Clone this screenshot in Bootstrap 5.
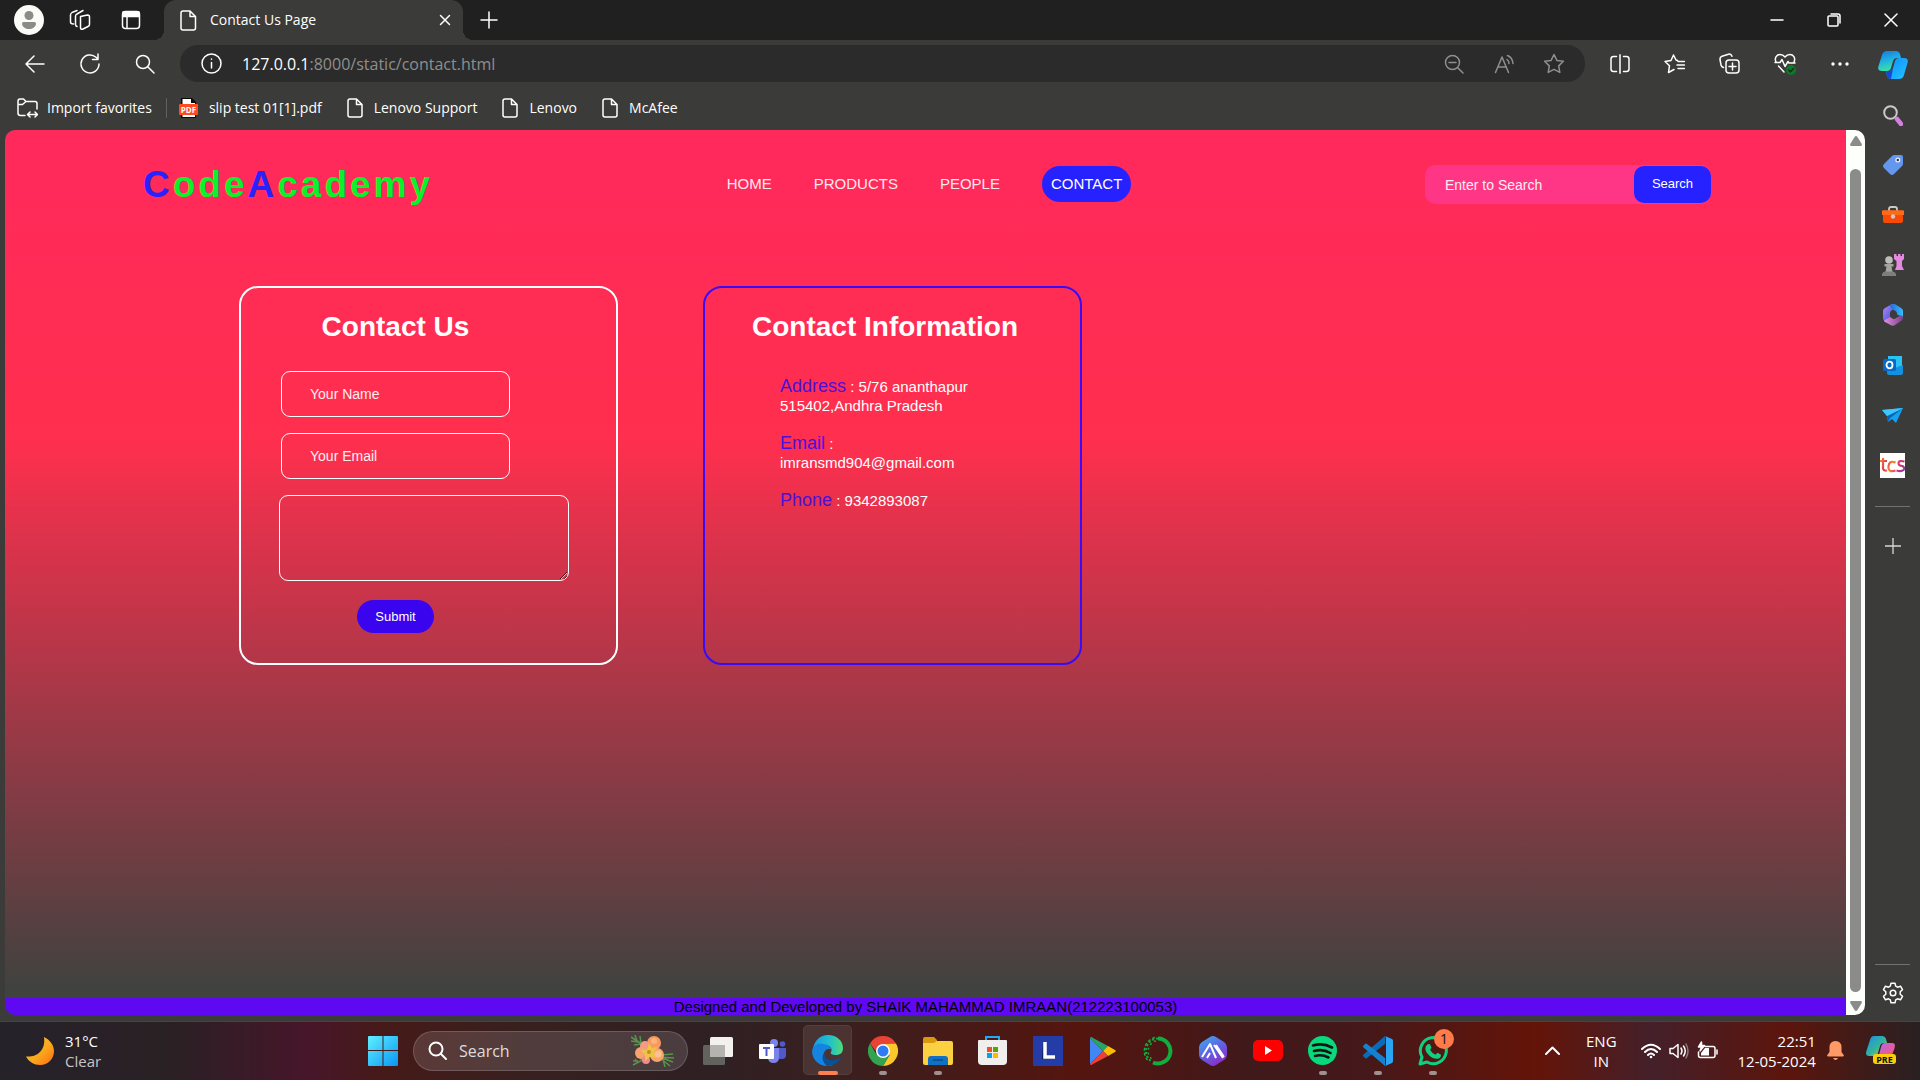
<!DOCTYPE html>
<html lang="en">
<head>
<meta charset="utf-8">
<meta name="viewport" content="width=device-width, initial-scale=1">
<title>Contact Us Page</title>
<link href="https://cdn.jsdelivr.net/npm/bootstrap@5.3.0/dist/css/bootstrap.min.css" rel="stylesheet">
<style>
  body { background: #3b3b39; color: #fff; font-family: "Open Sans", "Noto Sans", sans-serif; font-size: 14px; line-height: 20px; }
  svg { display: block; flex: none; }
  a { color: inherit; text-decoration: none; }
  .ln { fill: none; stroke: currentColor; stroke-width: 1.5; stroke-linecap: round; stroke-linejoin: round; }
  .flat { background: none; border: 0; padding: 0; color: inherit; display: flex; align-items: center; justify-content: center; flex: none; }
  .shrinkable { min-width: 0; min-height: 0; }

  /* tab strip */
  .tabstrip { background: #202020; height: 40px; flex: none; padding: 0 1px 0 3px; }
  .w51 { width: 51px; height: 40px; }
  .w57 { width: 57px; height: 40px; }
  .w55 { width: 55px; height: 50px; }
  .w50 { width: 50px; height: 36px; }
  .tab-on { width: 299px; height: 40px; background: #3b3b39; border-radius: 12px 12px 0 0; margin-left: 8px; padding: 0 12px 0 16px; position: relative; gap: 13px; }
  .tab-on::before, .tab-on::after { content: ""; position: absolute; bottom: 0; width: 10px; height: 10px; }
  .tab-on::before { left: -10px; background: radial-gradient(circle at 0 0, transparent 10px, #3b3b39 10px); }
  .tab-on::after { right: -10px; background: radial-gradient(circle at 100% 0, transparent 10px, #3b3b39 10px); }

  /* toolbar and favourites */
  .toolbar { height: 47px; padding-left: 7px; margin-right: -2px; }
  .omni { background: #2b2b2b; border-radius: 18px; height: 37px; margin: 0 7px 0 8px; padding-left: 21px; padding-right: 6px; color: #8f8f8f; }
  .omni .url { font-size: 16px; }
  .favs { height: 43px; padding: 0 0 2px 17px; }
  .favs a { display: flex; align-items: center; gap: 11px; margin-right: 25px; }
  .favs a.import { gap: 9px; margin-right: 0; }
  .favs .bar { width: 1px; height: 20px; background: #61615f; margin: 0 12px 0 14px; }

  /* page */
  .view { margin: 0 0 6px 5px; border-radius: 10px; overflow: hidden; min-height: 0; }
  .site { font-family: "Liberation Sans", Arial, sans-serif; background: linear-gradient(#ff295c 0%, #ff2f4e 35%, #40423f 97%); }
  .site-head { padding: 35px 135px 0 138px; height: 74px; }
  .brand { font-size: 37px; font-weight: 700; line-height: 39px; letter-spacing: 3px; color: #0df12c; }
  .brand span { color: #2a21ff; }
  .menu { gap: 42px; font-size: 15px; color: #ffe8ee; margin-bottom: 2px; }
  .menu .here { background: #2521ff; color: #fff; border-radius: 18px; height: 36px; line-height: 35px; padding: 0 9px; }
  .find { background: #ff3686; border-radius: 10px; width: 286px; height: 39px; }
  .find input { background: none; border: 0; color: #fff; font-size: 14px; padding: 0 0 0 20px; min-width: 0; flex: 1; outline: 0; }
  .find input::placeholder, .field::placeholder { color: #ffeef2; opacity: 1; }
  .find button { background: #2521ff; color: #fff; border: 0; border-radius: 10px; width: 77px; height: 37px; font-size: 13px; padding: 0 0 1px; }
  .panels { gap: 85px; padding: 82px 0 0 234px; }
  .panel { width: 379px; height: 379px; border: 2px solid #fff; border-radius: 19px; padding-top: 23px; }
  .panel.blue { border-color: #3a0cf5; }
  .panel h2 { font-size: 28px; font-weight: 700; line-height: 32px; margin: 0; text-align: center; }
  .mail { width: 233px; margin-left: 38px; }
  .field { background: none; border: 1px solid #fff; border-radius: 9px; color: #fff; font-size: 14px; width: 229px; height: 46px; padding: 0 28px; outline: 0; margin-bottom: 16px; }
  .mail h2 { margin-bottom: 28px; }
  textarea.field { width: 290px; height: 86px; align-self: flex-start; margin-bottom: 19px; flex: none; }
  .send { background: #3a04ef; color: #fff; border: 0; border-radius: 17px; width: 77px; height: 33px; font-size: 13px; padding: 0; }
  .info { width: 360px; }
  .facts { width: 210px; margin: 34px auto 0; font-size: 15px; line-height: 19px; }
  .facts p { margin: 0 0 19px; }
  .facts span { font-size: 18px; color: #4a10de; }
  .site-foot { background: #5e09f2; color: #000; font-size: 15px; line-height: 17px; text-align: center; }
  .scroller { width: 19px; background: #fdfffb; padding: 6px 0 4px; flex: none; }
  .thumb { width: 11px; background: #8b8b89; border-radius: 6px; margin: 23px 0 9px; flex: 1; }

  /* side bar */
  .side { width: 55px; flex: none; }
  .side .rule { width: 35px; height: 1px; background: #72726f; }
  .side .more { margin-top: 14px; }
  .side .gear { margin: 3px 0; }

  /* task bar */
  .taskbar { height: 59px; flex: none; border-top: 1px solid #4a4140; padding-bottom: 1px; font-size: 15px;
    background: linear-gradient(90deg, #25222a 0%, #2a2024 9%, #47162a 16%, #451a18 20%, #38201f 27%, #2f2024 37%, #3a1f1e 44%, #55150f 56%, #40191a 65%, #45181a 71%, #641408 80%, #44202a 86%, #5c150c 93%, #292022 100%); }
  .weather { padding-left: 26px; gap: 11px; flex: 1; }
  .weather span { color: #c9c5c6; }
  .hunt { width: 275px; height: 40px; margin: 0 2px 0 3px; border-radius: 20px; border: 1px solid rgba(255,255,255,.16); background: rgba(255,255,255,.13); padding: 0 12px 0 14px; }
  .hunt input { background: none; border: 0; color: #ddd; font-size: 16px; min-width: 0; flex: 1; padding: 0 0 0 12px; outline: 0; }
  .hunt input::placeholder { color: #ddd; opacity: 1; }
  .app { width: 55px; height: 57px; position: relative; }
  .app.dot::after { content: ""; position: absolute; left: 24px; bottom: 4px; width: 8px; height: 4px; border-radius: 2px; background: #a09090; }
  .app.live::before { content: ""; position: absolute; left: 3px; top: 3px; width: 49px; height: 50px; border-radius: 5px; background: rgba(255,255,255,.09); border: 1px solid rgba(255,255,255,.06); }
  .app.live::after { content: ""; position: absolute; left: 18px; bottom: 4px; width: 20px; height: 4px; border-radius: 2px; background: #ff7f50; }
  .app svg { position: relative; }
  .count { position: absolute; right: 6px; top: 7px; width: 20px; height: 20px; border-radius: 50%; background: #ff7b4a; color: #111; font-size: 14px; line-height: 20px; }
  .bold-ln { stroke-width: 2; }
  .tray { width: 460px; padding-left: 85px; }
  .tray .lang { margin: 0 24px 0 26px; text-align: center; }
  .tray .clock { text-align: right; margin-left: 20px; }
  .tray .bell { margin: 0 22px 0 11px; }
</style>
<script src="https://cdn.jsdelivr.net/npm/bootstrap@5.3.0/dist/js/bootstrap.bundle.min.js"></script>
</head>
<body class="vh-100 d-flex flex-column overflow-hidden">

<header class="tabstrip d-flex align-items-center">
  <button class="flat w51" aria-label="Profile"><svg width="30" height="30" viewBox="0 0 30 30"><circle cx="15" cy="15" r="15" fill="#fbfbf7"/><circle cx="15" cy="10.500" r="4.500" fill="#8b8b89"/><path d="M8 18.500q0-1.500 1.500-1.500h11q1.500 0 1.500 1.500c0 3.500-3.500 5.500-7 5.500s-7-2-7-5.500z" fill="#8b8b89"/></svg></button>
  <button class="flat w51" aria-label="Workspaces"><svg class="ln" width="22" height="22" viewBox="0 0 22 22"><path d="M11.500 7.500l7-1.500q2 0 2 2v7.500q0 1.500-1.500 2l-5 2.500q-2.500 1-2.500-1.500zM8 17.500q-1.500-.5-1.500-2V7.500q0-2 1.500-2.500l6-3.500M4.500 15q-3 0-3-2V6q0-1.500 1.500-2.500L8 1.500"/></svg></button>
  <button class="flat w51" aria-label="Tab actions"><svg class="ln" width="20" height="20" viewBox="0 0 20 20"><rect x="1.500" y="1.500" width="17" height="17" rx="3"/><path d="M2 2h16v4.500H2z" fill="#fff"/><path d="M6 7v11"/></svg></button>
  <div class="tab-on d-flex align-items-center">
    <svg class="ln" width="17" height="21" viewBox="0 0 17 21"><path d="M3 1h7l5.500 5.500V18q0 2-2 2H3q-2 0-2-2V3q0-2 2-2zM10 1v5.500h5.500"/></svg>
    <span class="flex-grow-1">Contact Us Page</span>
    <button class="flat" aria-label="Close tab"><svg class="ln" width="12" height="12" viewBox="0 0 12 12"><path d="M1.500 1.500l9 9M10.500 1.500l-9 9"/></svg></button>
  </div>
  <button class="flat w51" aria-label="New tab"><svg class="ln" width="18" height="18" viewBox="0 0 18 18"><path d="M9 1v16M1 9h16"/></svg></button>
  <div class="ms-auto d-flex">
    <button class="flat w57" aria-label="Minimize"><svg class="ln" width="14" height="14" viewBox="0 0 14 14"><path d="M1 7h12"/></svg></button>
    <button class="flat w57" aria-label="Restore"><svg class="ln" width="14" height="14" viewBox="0 0 14 14"><rect x="1" y="3" width="10" height="10" rx="1"/><path d="M4 1h7q2 0 2 2v7"/></svg></button>
    <button class="flat w57" aria-label="Close"><svg class="ln" width="14" height="14" viewBox="0 0 14 14"><path d="M1 1l12 12M13 1L1 13"/></svg></button>
  </div>
</header>

<div class="d-flex flex-grow-1 shrinkable">
  <div class="d-flex flex-column flex-grow-1 shrinkable">
    <div class="toolbar d-flex align-items-center">
      <button class="flat w55" aria-label="Back"><svg class="ln" width="20" height="18" viewBox="0 0 20 18"><path d="M19 9H1M9 1L1 9l8 8"/></svg></button>
      <button class="flat w55" aria-label="Refresh"><svg class="ln" width="22" height="22" viewBox="0 0 22 22"><path d="M20 11a9 9 0 1 1-3-6.800L19 6M19 1v5.500h-5.500"/></svg></button>
      <button class="flat w55" aria-label="Search"><svg class="ln" width="20" height="20" viewBox="0 0 20 20"><circle cx="8" cy="8" r="6.500"/><path d="M13 13l6 6"/></svg></button>
      <div class="omni d-flex align-items-center flex-grow-1">
        <svg class="ln text-white" width="21" height="21" viewBox="0 0 21 21"><circle cx="10.500" cy="10.500" r="9.500"/><path d="M10.500 9.500v5.500M10.500 6v.300"/></svg>
        <div class="url flex-grow-1 ms-3 ps-1"><span class="text-white">127.0.0.1</span>:8000/static/contact.html</div>
        <button class="flat w50" aria-label="Zoom out"><svg class="ln" width="20" height="20" viewBox="0 0 20 20"><circle cx="8.500" cy="8.500" r="7"/><path d="M14 14l5 5M5 8.500h7"/></svg></button>
        <button class="flat w50" aria-label="Read aloud"><svg class="ln" width="21" height="20" viewBox="0 0 21 20"><path d="M1.500 18.500L8 3l6.500 15.500M4 13h8M13 5.500q2 1.500 2 4M13.500 1.500q5 2 5.500 8"/></svg></button>
        <button class="flat w50" aria-label="Add favourite"><svg class="ln" width="22" height="21" viewBox="0 0 22 21"><path d="M11 1.500l2.900 5.900 6.500.900-4.700 4.600 1.100 6.500-5.800-3-5.800 3 1.100-6.500L1.600 8.300l6.500-.900z"/></svg></button>
      </div>
      <button class="flat w55" aria-label="Split screen"><svg class="ln" width="20" height="20" viewBox="0 0 20 20"><path d="M10 .800v18.400M6.500 2.500H3.500q-2.500 0-2.500 2.500v10q0 2.500 2.500 2.500h3M13.500 2.500h3q2.500 0 2.500 2.500v10q0 2.500-2.500 2.500h-3"/></svg></button>
      <button class="flat w55" aria-label="Favourites"><svg class="ln" width="21" height="20" viewBox="0 0 21 20"><path d="M13.500 6.500L12 6 9.500 1 7 6.500l-6 1 4.500 4.200-1 6.800 5.500-3M14 7.500h6.500M13 11h7.500M14 14.500h6.500"/></svg></button>
      <button class="flat w55" aria-label="Collections"><svg class="ln" width="21" height="21" viewBox="0 0 21 21"><path d="M4.500 14.500Q2.500 14 2 12L1 6.500Q.800 4 3 3.300L9.500 1.200q2.500-.700 3.500 2"/><rect x="7" y="7" width="13" height="13" rx="3"/><path d="M13.500 10v7M10 13.500h7"/></svg></button>
      <button class="flat w55" aria-label="Browser essentials"><svg class="ln" width="22" height="22" viewBox="0 0 22 22"><path d="M2 9C0 4.500 3 1.500 6 1.500q3 0 5 2.500 2-2.500 5-2.500c3 0 6 3 4 7.500M1 9.500h5l2-3 3 7 3-5 1 1.500h6M4.500 13l5.500 6"/><circle cx="17" cy="17" r="5" fill="#0b7a25" stroke="none"/><path d="M14.800 17l1.700 1.700 3-3.200" stroke="#223"/></svg></button>
      <button class="flat w55" aria-label="Settings and more"><svg width="18" height="6" viewBox="0 0 18 6" fill="#fff"><circle cx="2" cy="3" r="1.700"/><circle cx="9" cy="3" r="1.700"/><circle cx="16" cy="3" r="1.700"/></svg></button>
    </div>
    <nav class="favs d-flex align-items-center" aria-label="Favourites bar">
      <a href="#" class="import"><svg class="ln" width="21" height="20" viewBox="0 0 21 20"><path d="M8 17.500H3.500q-2.500 0-2.500-2.500V3.500Q1 1 3 1h3.500L9 3.500h9q2 0 2 2V11M1 6.500h4.500L9 3.500M11 16.500h9M13 14l-2.500 2.500L13 19M18 14l2.500 2.500L18 19"/></svg>Import favorites</a>
      <span class="bar"></span>
      <a href="#"><svg width="19" height="20" viewBox="0 0 19 20"><path d="M2 0h11l4 4v16H2z" fill="#0a0a0a"/><path d="M3.500 1h8.500v4h4v14H3.500z" fill="#fff"/><rect y="6" width="19" height="11" rx="1" fill="#ff4b1f"/><text x="9.500" y="14.500" font-size="8" font-weight="700" fill="#fff" text-anchor="middle" font-family="Open Sans">PDF</text></svg>slip test 01[1].pdf</a>
      <a href="#"><svg class="ln" width="16" height="20" viewBox="0 0 16 20"><path d="M3 1h6.500L15 6.500V17q0 2-2 2H3q-2 0-2-2V3q0-2 2-2zM9.500 1v5.500H15"/></svg>Lenovo Support</a>
      <a href="#"><svg class="ln" width="16" height="20" viewBox="0 0 16 20"><path d="M3 1h6.500L15 6.500V17q0 2-2 2H3q-2 0-2-2V3q0-2 2-2zM9.500 1v5.500H15"/></svg>Lenovo</a>
      <a href="#"><svg class="ln" width="16" height="20" viewBox="0 0 16 20"><path d="M3 1h6.500L15 6.500V17q0 2-2 2H3q-2 0-2-2V3q0-2 2-2zM9.500 1v5.500H15"/></svg>McAfee</a>
    </nav>

    <div class="view d-flex flex-grow-1">
      <main class="site d-flex flex-column flex-grow-1">
        <div class="site-head d-flex justify-content-between align-items-center">
          <a href="#" class="brand"><span>C</span>ode<span>A</span>cademy</a>
          <nav class="menu d-flex align-items-center">
            <a href="#">HOME</a><a href="#">PRODUCTS</a><a href="#">PEOPLE</a><a href="#" class="here">CONTACT</a>
          </nav>
          <form class="find d-flex align-items-center">
            <input type="search" placeholder="Enter to Search" aria-label="Enter to Search">
            <button type="button">Search</button>
          </form>
        </div>
        <div class="panels d-flex">
          <section class="panel">
            <form class="mail d-flex flex-column align-items-center">
              <h2>Contact Us</h2>
              <input class="field" type="text" placeholder="Your Name" aria-label="Your Name">
              <input class="field" type="email" placeholder="Your Email" aria-label="Your Email">
              <textarea class="field" aria-label="Message"></textarea>
              <button class="send" type="button">Submit</button>
            </form>
          </section>
          <section class="panel blue">
            <div class="info">
              <h2>Contact Information</h2>
              <div class="facts">
                <p><span>Address</span> : 5/76 ananthapur 515402,Andhra Pradesh</p>
                <p><span>Email</span> : imransmd904@gmail.com</p>
                <p><span>Phone</span> : 9342893087</p>
              </div>
            </div>
          </section>
        </div>
        <footer class="site-foot mt-auto">Designed and Developed by SHAIK MAHAMMAD IMRAAN(212223100053)</footer>
      </main>
      <div class="scroller d-flex flex-column align-items-center">
        <svg width="12" height="10" viewBox="0 0 12 10"><path d="M6 0q.800 0 1.300.800L11.800 8q.500 2-1.300 2h-9Q-.300 10 .200 8L4.700.800Q5.200 0 6 0z" fill="#8b8b89"/></svg>
        <div class="thumb"></div>
        <svg width="12" height="10" viewBox="0 0 12 10"><path d="M6 10q.800 0 1.300-.800L11.800 2q.500-2-1.300-2h-9Q-.300 0 .200 2l4.500 7.200Q5.200 10 6 10z" fill="#8b8b89"/></svg>
      </div>
    </div>
  </div>

  <aside class="side d-flex flex-column align-items-center">
    <button class="flat w55" aria-label="Copilot"><svg width="30" height="28" viewBox="0 0 30 28"><defs><linearGradient id="cpa" x2=".3" y2="1"><stop stop-color="#1176e8"/><stop offset=".6" stop-color="#24b8dc"/><stop offset="1" stop-color="#3ae0a0"/></linearGradient><linearGradient id="cpb" y2="1"><stop stop-color="#0a8dff"/><stop offset="1" stop-color="#25c4ff"/></linearGradient></defs><path d="M9 0h9q3 0 4 3l1 4h-4q-3 0-4 3l-2 7q-1 3-4 3H4q-5 0-3.500-5L4 4q1-4 5-4z" fill="url(#cpa)"/><path d="M21 28h-8q-3 0-4-3l-1-5h3q3 0 4-3l2-7q1-3 4-3h5q5 0 3.500 5L26 24q-1 4-5 4z" fill="url(#cpb)"/><path d="M8 20h3q3 0 4-3l-2 11q-3 0-4-3z" fill="#1548d8"/></svg></button>
    <button class="flat w55" aria-label="Search"><svg width="20" height="21" viewBox="0 0 20 21"><circle cx="7.500" cy="7.500" r="6.300" fill="none" stroke="#c9c9c5" stroke-width="2"/><path d="M14 14l4 5" stroke="#d77fe0" stroke-width="4.500" stroke-linecap="round"/></svg></button>
    <button class="flat w55" aria-label="Shopping"><svg width="20" height="20" viewBox="0 0 20 20"><path d="M9 1q1-1 2.500-1H18q2 0 2 2v7q0 1-1 2l-8 8q-2 2-4 0l-6-6q-2-2 0-4z" fill="#6398ee"/><circle cx="14.800" cy="5" r="2.500" fill="#eef"/><circle cx="14.800" cy="5" r="1.200" fill="#333"/></svg></button>
    <button class="flat w55" aria-label="Tools"><svg width="22" height="18" viewBox="0 0 22 18"><path d="M7 5V3q0-2 2-2h4q2 0 2 2v2" fill="none" stroke="#c9c9c5" stroke-width="1.800"/><path d="M0 5q0-.800 1-.800h20q1 0 1 .800v4H0z" fill="#ff6a18"/><path d="M1 9h20v6q0 2-2 2H3q-2 0-2-2z" fill="#f64a05"/><circle cx="11" cy="10.500" r="2.200" fill="#d0c8c0"/></svg></button>
    <button class="flat w55" aria-label="Games"><svg width="22" height="22" viewBox="0 0 22 22"><path d="M12 0h2.500v2h1.500V0h2.500v2H20V0h2v5l-2 2v5l2 4H13l1.500-4V7L12 5z" fill="#e389e0"/><circle cx="7" cy="6" r="3.800" fill="#bdbdb9"/><path d="M2.500 10h9v2.500h-2l1 5.500h-7l1-5.500h-2z" fill="#a4a4a0"/><path d="M0 20q1-2.500 3-2.500h8q2 0 3 2.500v2H0z" fill="#7e7e7b"/></svg></button>
    <button class="flat w55" aria-label="Microsoft 365"><svg width="20" height="22" viewBox="0 0 20 22"><defs><linearGradient id="m1" y2="1"><stop stop-color="#b48af0"/><stop offset="1" stop-color="#3b4fe0"/></linearGradient><linearGradient id="m2"><stop stop-color="#2468e0"/><stop offset="1" stop-color="#38bdf8"/></linearGradient><linearGradient id="m3"><stop stop-color="#e090e0"/><stop offset="1" stop-color="#7a3f88"/></linearGradient></defs><path d="M9 0L2 4Q0 5 0 7v7q0 2 1.500 3l5.500-3V9q0-1.500 1.500-2.500L11 5Z" fill="url(#m1)"/><path d="M7 1q3-2 5.500-.500L18 4q2 1 2 3v6l-6-2.500V9.500Q14 8 12.500 7L8 4.500z" fill="url(#m2)"/><path d="M1 16.500l6-3.500 2.500 1.500q1.500 1 3 0L18 11l2 2v1q0 2-2 3l-6 4q-2 1.500-4.500 0L2 18q-1-.500-1-1.500z" fill="url(#m3)"/></svg></button>
    <button class="flat w55" aria-label="Outlook"><svg width="20" height="19" viewBox="0 0 20 19"><path d="M5 0h14v12H5z" fill="#28c2f4"/><path d="M4 9l8 3 8-3v8q0 2-2 2H6q-2 0-2-2z" fill="#1490df"/><rect y="3" width="13" height="12" rx="1.500" fill="#0669c9"/><ellipse cx="6.500" cy="9" rx="3" ry="3.300" fill="none" stroke="#fff" stroke-width="1.800"/></svg></button>
    <button class="flat w55" aria-label="Drop"><svg width="21" height="15" viewBox="0 0 21 15"><path d="M0 2l21-2-7 15-4-4-4 3-1-6z" fill="#16a0ee"/><path d="M5 8l15-7L8 10l-2 4z" fill="#0862b4"/><path d="M0 2l21-2L5 8z" fill="#3cc8ff"/></svg></button>
    <button class="flat w55" aria-label="TCS"><svg width="25" height="25" viewBox="0 0 25 25"><defs><linearGradient id="tc" gradientUnits="userSpaceOnUse" x1="0" y1="5" x2="25" y2="15"><stop stop-color="#f0902a"/><stop offset=".3" stop-color="#e8305a"/><stop offset=".5" stop-color="#f0902a"/><stop offset=".75" stop-color="#e03070"/><stop offset="1" stop-color="#8a3fa0"/></linearGradient></defs><path d="M0 0h25v25H0z" fill="#fff"/><path d="M3 5v10q0 3 4 2.500M0 8h7M15.500 9.500Q9 7 8.500 13.500t7 4M24.500 8.500q-6-1.500-6 1.500t4 3q3 2 1 4t-7 .500" fill="none" stroke="url(#tc)" stroke-width="2.200"/></svg></button>
    <span class="rule mt-3"></span>
    <button class="flat w55 more" aria-label="Customize"><svg width="16" height="16" viewBox="0 0 16 16" stroke="#d8d8d4" stroke-width="1.300"><path d="M8 0v16M0 8h16"/></svg></button>
    <span class="rule mt-auto"></span>
    <button class="flat w55 gear" aria-label="Settings"><svg class="ln" width="22" height="22" viewBox="0 0 22 22"><circle cx="11" cy="11" r="2.800"/><path d="M9 1.200h4l.700 3 1.800 1 3-1 2 3.500-2.300 2.100v2.400l2.300 2.100-2 3.500-3-1-1.800 1-.700 3H9l-.700-3-1.800-1-3 1-2-3.500 2.300-2.100V9.800L1.500 7.700l2-3.500 3 1 1.800-1z"/></svg></button>
  </aside>
</div>

<footer class="taskbar d-flex align-items-center">
  <div class="weather d-flex align-items-center">
    <svg width="28" height="28" viewBox="0 0 28 28"><defs><linearGradient id="mn" y2="1"><stop stop-color="#e8c33a"/><stop offset=".55" stop-color="#fba81c"/><stop offset="1" stop-color="#ff6a12"/></linearGradient></defs><path d="M18 0c6 3 10 8 10 14 0 8-6 14-14 14-6 0-11-3-14-8.500 10 1 20-5 18-19.500z" fill="url(#mn)"/></svg>
    <div>31°C<br><span>Clear</span></div>
  </div>
  <button class="flat app" aria-label="Start"><svg width="30" height="30" viewBox="0 0 30 30"><defs><linearGradient id="wn" x2="1" y2="1"><stop stop-color="#5ff0ff"/><stop offset="1" stop-color="#0a96f4"/></linearGradient></defs><path d="M1 0h13.500v14H0V1q0-1 1-1zM15.500 0H29q1 0 1 1v13H15.500zM0 15h14.500v15H1q-1 0-1-1zM15.500 15H30v14q0 1-1 1H15.500z" fill="url(#wn)"/></svg></button>
  <div class="hunt d-flex align-items-center">
    <svg class="ln bold-ln" width="19" height="19" viewBox="0 0 19 19"><circle cx="8" cy="8" r="6.500"/><path d="M13 13l5 5"/></svg>
    <input type="search" placeholder="Search" aria-label="Search">
    <svg width="44" height="32" viewBox="0 0 44 32"><g stroke="#57934a" stroke-width="1.500" fill="none"><path d="M0 2l14 9M4 0l2 6M9 1l1 7M0 6l7 1M3 10l7-1M2 30l13-7M4 24l3 4M9 22l2 4M2 26h5M28 22l15 1M28 22l14 5M28 22l11 9M30 20l12-1M32 24l2 8"/></g><circle cx="14" cy="11" r="5" fill="#f49a8c"/><circle cx="23" cy="8" r="7" fill="#f79a5c"/><circle cx="23" cy="6" r="3" fill="#fbb47c"/><circle cx="10" cy="18" r="6" fill="#f7a36c"/><circle cx="15" cy="25" r="4" fill="#f28b86"/><circle cx="26" cy="20" r="7" fill="#fba268"/><circle cx="27" cy="19" r="3.500" fill="#fcc095"/><path d="M18 8l3 5 5-1-3 5 2 6-6-1-5 4v-6l-4-5h6z" fill="#ecc546"/><circle cx="18" cy="17" r="2" fill="#c98c20"/></svg>
  </div>
  <button class="flat app" aria-label="Task view"><svg width="30" height="28" viewBox="0 0 30 28"><rect y="8" width="22" height="20" rx="1.500" fill="#62625f"/><rect x="7" width="23" height="20" rx="1.500" fill="#f3f1ee"/><path d="M7 8h15v12H7z" fill="#b5b3b0"/></svg></button>
  <button class="flat app" aria-label="Teams"><svg width="27" height="24" viewBox="0 0 27 24"><circle cx="15" cy="4" r="4" fill="#7b83eb"/><circle cx="23.500" cy="5" r="2.800" fill="#5059c9"/><path d="M19 9h8v7q0 4-4 4h-4z" fill="#5059c9"/><path d="M9 9h11v9q0 6-5.500 6T9 18z" fill="#7b83eb"/><rect y="5" width="15" height="15" rx="1" fill="#fff"/><path d="M4 9h7M7.500 9v8" stroke="#5059c9" stroke-width="2"/></svg></button>
  <button class="flat app live" aria-label="Edge"><svg width="31" height="31" viewBox="0 0 31 31"><defs><linearGradient id="ed" x2="1"><stop stop-color="#139be8"/><stop offset=".6" stop-color="#25c2c8"/><stop offset="1" stop-color="#50dd72"/></linearGradient></defs><path d="M1 14C2 6 8 0 16 0c9 0 15 6 15 13 0 5-3 7-7 7-4 0-6-1-5-3 2-3-1-7-6-7-6 0-10 3-12 6z" fill="url(#ed)"/><path d="M0 16c1-6 6-8 11-7 4 0 8 3 8 6-1-2-7-1-7 4 0 7 6 11 9 11C10 34 0 26 0 16z" fill="#1583e0"/><path d="M12 18c0 5 5 8 10 7 4 0 7-3 7-2-3 5-8 8-14 8-4-3-6-9-3-13z" fill="#0b4f94"/></svg></button>
  <button class="flat app dot" aria-label="Chrome"><svg width="30" height="30" viewBox="0 0 30 30"><path d="M2 7.500A15 15 0 0 1 28 7.500L15 8l-5 10z" fill="#ea4335"/><path d="M28 7.500A15 15 0 0 1 15 30l6.500-11L15 8z" fill="#fbc72b"/><path d="M2 7.500A15 15 0 0 0 15 30l6.500-11-13-.500z" fill="#34a350"/><circle cx="15" cy="15" r="7" fill="#fff"/><circle cx="15" cy="15" r="5.500" fill="#2f7bf3"/></svg></button>
  <button class="flat app dot" aria-label="File Explorer"><svg width="30" height="28" viewBox="0 0 30 28"><path d="M0 2q0-2 2-2h9l3 3v9H0z" fill="#d9980f"/><path d="M0 6h11l3-2h14q2 0 2 2v20q0 2-2 2H2q-2 0-2-2z" fill="#fbd141"/><path d="M5 28v-6q0-3 3-3h14q3 0 3 3v6z" fill="#1170c4"/><path d="M10 23h10" stroke="#0a4890" stroke-width="1.500"/></svg></button>
  <button class="flat app" aria-label="Store"><svg width="29" height="29" viewBox="0 0 29 29"><path d="M8 6V1h13v5" fill="none" stroke="#23a9f2" stroke-width="2"/><path d="M0 5q0-1 1-1h27q1 0 1 1v20q0 4-4 4H4q-4 0-4-4z" fill="#f1efed"/><path d="M9 11h5v5H9z" fill="#f25022"/><path d="M15 11h5v5h-5z" fill="#5ba300"/><path d="M9 17h5v5H9z" fill="#00a4ef"/><path d="M15 17h5v5h-5z" fill="#ffb900"/></svg></button>
  <button class="flat app" aria-label="Lenovo"><svg width="30" height="30" viewBox="0 0 30 30"><path d="M0 0h30v30H0z" fill="#243ca8"/><path d="M10 7l-1 16h12l-8-4z" fill="#101c50"/><path d="M12 6v15h10" fill="none" stroke="#fff" stroke-width="3.500"/></svg></button>
  <button class="flat app" aria-label="Play"><svg width="26" height="28" viewBox="0 0 26 28"><path d="M0 1v26l13-13z" fill="#4285f4"/><path d="M0 1q1-2 3 0l15 8-5 5z" fill="#23a566"/><path d="M18 9l7 4q1.500 1 0 2l-7 4-5-5z" fill="#fbbc04"/><path d="M0 27q1 2 3 0l15-8-5-5z" fill="#ea4335"/></svg></button>
  <button class="flat app" aria-label="Anaconda"><svg width="30" height="30" viewBox="0 0 30 30" fill="none" stroke="#12ad3f"><path d="M15 2.500a12.500 12.500 0 1 1-5 24" stroke-width="4"/><path d="M15 2.500a12.500 12.500 0 0 0-7 22.500" stroke-width="2" stroke-dasharray="2 2"/><path d="M12 1.500a14 14 0 0 0-6 24" stroke-width="1.500" stroke-dasharray="3 2"/><path d="M13 5a10.500 10.500 0 0 0-3 19" stroke-width="1.500" stroke-dasharray="2 3"/></svg></button>
  <button class="flat app" aria-label="Navigator"><svg width="28" height="30" viewBox="0 0 28 30"><defs><linearGradient id="nv" x2=".6" y2="1"><stop stop-color="#3fb2e8"/><stop offset=".5" stop-color="#5a6ae8"/><stop offset="1" stop-color="#8a2ec8"/></linearGradient></defs><path d="M11 1q3-2 6 0l8 5q3 2 3 5v8q0 3-3 5l-8 5q-3 2-6 0l-8-5q-3-2-3-5v-8q0-3 3-5z" fill="url(#nv)"/><path d="M3 21L11 8l6 14M11 17l-3 5M15 9l9 13M17 9l8 12" fill="none" stroke="#fff" stroke-width="2" stroke-linejoin="round"/></svg></button>
  <button class="flat app" aria-label="YouTube"><svg width="30" height="21" viewBox="0 0 30 21"><rect width="30" height="21" rx="5" fill="#f00"/><path d="M12 6l7 4.500-7 4.500z" fill="#fff"/></svg></button>
  <button class="flat app dot" aria-label="Spotify"><svg width="29" height="29" viewBox="0 0 29 29"><circle cx="14.500" cy="14.500" r="14.500" fill="#08d97c"/><path d="M5 9.500q10-3 19 2M6 15q9-2.500 16.500 2M7 20q7-2 13.500 1.500" fill="none" stroke="#141414" stroke-width="2.600" stroke-linecap="round"/></svg></button>
  <button class="flat app dot" aria-label="VS Code"><svg width="30" height="30" viewBox="0 0 30 30"><path d="M22 0v8L4 22q-1 1-2 0l-1.500-1.500q-1-1 0-2z" fill="#0a6cb8"/><path d="M22 30v-8L4 8Q3 7 2 8L.500 9.500q-1 1 0 2z" fill="#1482d0"/><path d="M22 0l7 3q1 .500 1 2v20q0 1.500-1 2l-7 3q1-1 1-2V2q0-1-1-2z" fill="#2aa4f4"/></svg></button>
  <button class="flat app dot" aria-label="WhatsApp"><svg width="30" height="30" viewBox="0 0 30 30"><path d="M2 28l2-7a13 13 0 1 1 5 5z" fill="none" stroke="#0fcf80" stroke-width="3" stroke-linejoin="round"/><path d="M10 8l2 .300 1.500 3.500-1.500 2q2 3.500 5.500 5l2-2 3.500 2q0 4-4 4-5 0-9-4.500T8 10z" fill="#0fcf80"/></svg><span class="count">1</span></button>

  <div class="tray d-flex align-items-center">
    <svg class="ln bold-ln" width="15" height="9" viewBox="0 0 15 9"><path d="M1 8l6.500-6.500L14 8"/></svg>
    <div class="lang">ENG<br>IN</div>
    <svg class="ln bold-ln" width="20" height="16" viewBox="0 0 20 16"><path d="M1 6q9-8.500 18 0M4 9q6-6 12 0M7 12q3-3 6 0"/><circle cx="10" cy="14" r="1.300" fill="#fff" stroke="none"/></svg>
    <svg class="ln ms-2" width="20" height="16" viewBox="0 0 20 16"><path d="M1 5.500h3L9 1.500v13l-5-4H1zM12 5q2 3 0 6M14.500 3q3.500 5 0 10"/><path d="M17 1q4 7 0 14" stroke="#8a7a7c"/></svg>
    <svg class="ln ms-2" width="21" height="19" viewBox="0 0 21 19"><path d="M8 5.500h8q2 0 2 2v7q0 2-2 2H3.500q-2 0-2-2V11M20 9v4"/><path d="M8 7h4v7.500H4V12z" fill="#fff" stroke="none"/><path d="M4.500 1L1.500 6h3L3 10l4.500-5.500h-3z" fill="#fff"/></svg>
    <div class="clock">22:51<br>12-05-2024</div>
    <svg class="bell" width="17" height="19" viewBox="0 0 17 19"><path d="M8.500 0q6 0 6 6.500V11l2.200 3q.600 1.500-1 1.500H1.300q-1.600 0-1-1.500l2.200-3V6.500Q2.500 0 8.500 0zM6 17h5q-1 2-2.500 2T6 17z" fill="#ff9a66"/></svg>
    <svg width="30" height="29" viewBox="0 0 30 29"><defs><linearGradient id="pc" y2="1"><stop stop-color="#1c8cf0"/><stop offset=".55" stop-color="#33b59a"/><stop offset="1" stop-color="#f2c01c"/></linearGradient><linearGradient id="pd" y2="1"><stop stop-color="#b464f4"/><stop offset="1" stop-color="#ff5a70"/></linearGradient></defs><path d="M8 0h8q3 0 4 3l1 4h-3q-3 0-4 3l-2 7q-1 3-4 3H3q-4 0-2.600-5L4 4q1-4 4-4z" fill="url(#pc)"/><path d="M22 7h4q4 0 2.600 5L26 19H13l2-8q1-4 4-4z" fill="url(#pd)"/><rect x="7" y="18" width="23" height="10" rx="3" fill="#f9cf0a"/><text x="18.500" y="26.500" font-size="9" font-weight="700" text-anchor="middle" font-family="Open Sans" fill="#111">PRE</text></svg>
  </div>
</footer>
</body>
</html>
